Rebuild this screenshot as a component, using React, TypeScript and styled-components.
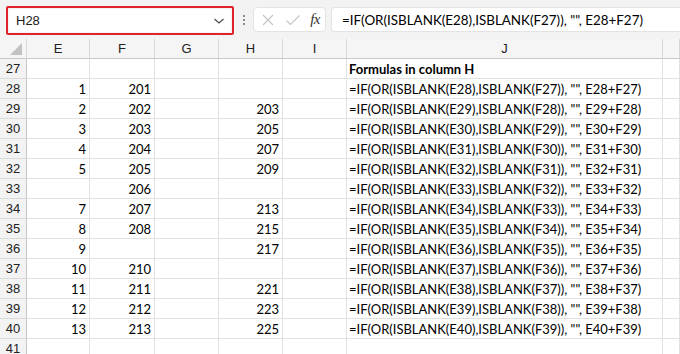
import React from "react";
import styled, { createGlobalStyle } from "styled-components";

const GlobalStyle = createGlobalStyle`
  html, body {
    margin: 0;
    padding: 0;
    background: #ffffff;
    overflow: hidden;
  }
`;

const RootUI = styled.div`
  width: 680px;
  height: 354px;
  overflow: hidden;
  font-family: "Liberation Sans", Arial, sans-serif;
  color: #000000;
`;

const Toolbar = styled.div`
  display: flex;
  align-items: center;
  height: 39px;
  background: #f3f3f3;
  box-sizing: border-box;
  padding: 0 0 0 6px;
`;

// red annotation round the name box
const NameBoxFrame = styled.div`
  width: 228px;
  height: 29px;
  box-sizing: border-box;
  border: 2px solid #e2212a;
  border-radius: 2px;
  padding: 1px;
  margin-top: 2px;
`;

const NameBox = styled.div`
  display: flex;
  align-items: center;
  justify-content: space-between;
  height: 100%;
  box-sizing: border-box;
  background: #ffffff;
  border-radius: 4px;
  padding: 0 6px 0 7px;
  font-size: 13px;
  color: #1a1a1a;
`;

const Dots = styled.div`
  display: flex;
  flex-direction: column;
  gap: 2px;
  margin: 0 8px 0 9px;
  span {
    width: 2px;
    height: 2px;
    background: #8a8a8a;
  }
`;

const IconGroup = styled.div`
  display: flex;
  align-items: center;
  justify-content: space-between;
  width: 73px;
  height: 25px;
  box-sizing: border-box;
  background: #ffffff;
  border: 1px solid #e3e3e3;
  border-radius: 4px;
  padding: 0 5px 0 7px;
  .fx {
    font-family: "Liberation Serif", "Times New Roman", serif;
    font-style: italic;
    font-size: 15px;
    color: #333333;
    letter-spacing: -0.5px;
  }
`;

const FormulaBar = styled.div`
  flex: 1;
  display: flex;
  align-items: center;
  height: 25px;
  margin-left: 5px;
  box-sizing: border-box;
  background: #ffffff;
  border: 1px solid #e3e3e3;
  border-right: none;
  border-radius: 4px 0 0 4px;
  padding-left: 10px;
  font-family: "Lato", "Liberation Sans", sans-serif;
  font-size: 13.4px;
  white-space: nowrap;
  overflow: hidden;
`;

const Sheet = styled.div`
  display: grid;
  grid-template-columns: 27px 63px 65px 64px 64px 64px 316px 1fr;
  grid-auto-rows: 20px;
`;

const Corner = styled.div`
  display: flex;
  align-items: flex-end;
  justify-content: flex-end;
  padding: 0 4px 3px 0;
  box-sizing: border-box;
  background: #f5f5f5;
  border-right: 1px solid #d6d6d6;
  border-bottom: 1px solid #c8c8c8;
`;

const ColHead = styled.div`
  display: flex;
  align-items: center;
  justify-content: center;
  box-sizing: border-box;
  background: #f5f5f5;
  border-right: 1px solid #d6d6d6;
  border-bottom: 1px solid #c8c8c8;
  font-size: 13px;
  color: #222222;
`;

const RowHead = styled.div`
  display: flex;
  align-items: center;
  justify-content: center;
  box-sizing: border-box;
  background: #f3f3f3;
  border-right: 1px solid #c8c8c8;
  border-bottom: 1px solid #dadada;
  font-size: 13px;
  color: #222222;
`;

const Cell = styled.div<{ $align?: "left" | "right"; $bold?: boolean }>`
  display: flex;
  align-items: center;
  justify-content: ${(p) => (p.$align === "left" ? "flex-start" : "flex-end")};
  box-sizing: border-box;
  padding: 1px 3px 0 2px;
  border-right: 1px solid #e1e1e1;
  border-bottom: 1px solid #e1e1e1;
  font-family: "Lato", "Liberation Sans", sans-serif;
  font-size: 13px;
  font-weight: ${(p) => (p.$bold ? 700 : 400)};
  white-space: nowrap;
  overflow: hidden;
`;

type Row = { n: number; e?: number; f?: number; h?: number };

const rows: Row[] = [
  { n: 28, e: 1, f: 201 },
  { n: 29, e: 2, f: 202, h: 203 },
  { n: 30, e: 3, f: 203, h: 205 },
  { n: 31, e: 4, f: 204, h: 207 },
  { n: 32, e: 5, f: 205, h: 209 },
  { n: 33, f: 206 },
  { n: 34, e: 7, f: 207, h: 213 },
  { n: 35, e: 8, f: 208, h: 215 },
  { n: 36, e: 9, h: 217 },
  { n: 37, e: 10, f: 210 },
  { n: 38, e: 11, f: 211, h: 221 },
  { n: 39, e: 12, f: 212, h: 223 },
  { n: 40, e: 13, f: 213, h: 225 },
];

const formula = (n: number) =>
  `=IF(OR(ISBLANK(E${n}),ISBLANK(F${n - 1})), "", E${n}+F${n - 1})`;

const columns = ["E", "F", "G", "H", "I", "J", ""];

const App: React.FC = () => {
  return (
    <RootUI>
      <GlobalStyle />
      <Toolbar>
        <NameBoxFrame>
          <NameBox>
            <span>H28</span>
            <svg width="12" height="8" viewBox="0 0 12 8">
              <path d="M1.5 2 L6 6 L10.5 2" fill="none" stroke="#444" strokeWidth="1.1" />
            </svg>
          </NameBox>
        </NameBoxFrame>
        <Dots>
          <span />
          <span />
          <span />
        </Dots>
        <IconGroup>
          <svg width="14" height="14" viewBox="0 0 14 14">
            <path d="M2 2 L12 12 M12 2 L2 12" stroke="#c4c4c4" strokeWidth="1.1" />
          </svg>
          <svg width="16" height="14" viewBox="0 0 16 14">
            <path d="M1.5 7.5 L5.5 11.5 L14.5 2.5" fill="none" stroke="#c4c4c4" strokeWidth="1.1" />
          </svg>
          <span className="fx">fx</span>
        </IconGroup>
        <FormulaBar>{formula(28)}</FormulaBar>
      </Toolbar>

      <Sheet>
        <Corner>
          <svg width="12" height="12" viewBox="0 0 12 12">
            <path d="M12 0 L12 12 L0 12 Z" fill="#c2c2c2" />
          </svg>
        </Corner>
        {columns.map((c, i) => (
          <ColHead key={i}>{c}</ColHead>
        ))}

        <RowHead>27</RowHead>
        <Cell />
        <Cell />
        <Cell />
        <Cell />
        <Cell />
        <Cell $align="left" $bold>
          Formulas in column H
        </Cell>
        <Cell />

        {rows.map((r) => (
          <React.Fragment key={r.n}>
            <RowHead>{r.n}</RowHead>
            <Cell>{r.e}</Cell>
            <Cell>{r.f}</Cell>
            <Cell />
            <Cell>{r.h}</Cell>
            <Cell />
            <Cell $align="left">{formula(r.n)}</Cell>
            <Cell />
          </React.Fragment>
        ))}

        <RowHead>41</RowHead>
        <Cell />
        <Cell />
        <Cell />
        <Cell />
        <Cell />
        <Cell />
        <Cell />
      </Sheet>
    </RootUI>
  );
};

export default App;
